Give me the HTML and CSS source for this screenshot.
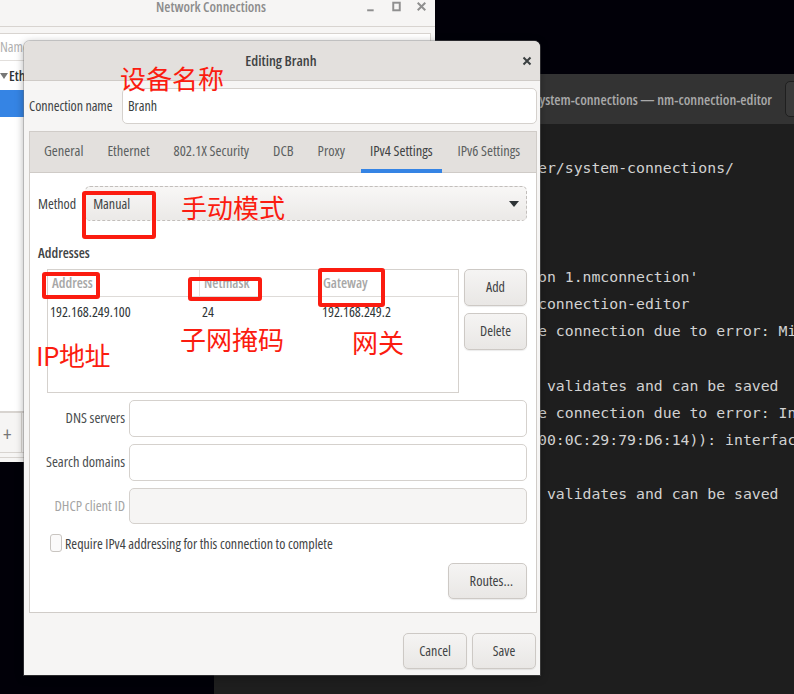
FILE: index.html
```html
<!DOCTYPE html>
<html lang="en">
<head>
<meta charset="utf-8">
<title>Editing Branh</title>
<link rel="stylesheet" href="styles.css">
</head>
<body>
<div class="desktop">
  <section class="terminal">
    <header class="term-head">
      <span class="term-title">system-connections — nm-connection-editor</span>
      <span class="term-btn"></span>
    </header>
    <pre class="term-body">er/system-connections/



on 1.nmconnection'
connection-editor
e connection due to error: Missing

 validates and can be saved
e connection due to error: Invalid
00:0C:29:79:D6:14)): interface

 validates and can be saved</pre>
  </section>

  <section class="net-window">
    <header class="net-head">
      <span class="net-title">Network Connections</span>
      <span class="net-controls">
        <svg class="ctl" viewBox="0 0 12 12"><path d="M2 9.5h6" /></svg>
        <svg class="ctl" viewBox="0 0 12 12"><rect x="3" y="2.5" width="6" height="7" /></svg>
        <svg class="ctl" viewBox="0 0 12 12"><path d="M2.5 2.5l7 7M9.5 2.5l-7 7" /></svg>
      </span>
    </header>
    <div class="net-list">
      <div class="net-col">Name</div>
      <div class="net-group"><i class="caret"></i>Eth</div>
      <div class="net-row"></div>
    </div>
    <footer class="net-foot"><div class="foot-bar"><span class="plus">+</span></div></footer>
  </section>

  <section class="dialog">
    <header class="dlg-head">
      <span class="dlg-title">Editing Branh</span>
      <svg class="dlg-close" viewBox="0 0 12 12"><path d="M2.5 2.5l7 7M9.5 2.5l-7 7" /></svg>
    </header>
    <div class="dlg-body">
      <div class="name-row">
        <label class="name-label">Connection name</label>
        <div class="field name-field">Branh</div>
      </div>
      <div class="notebook">
        <nav class="tabs">
          <span class="tab">General</span>
          <span class="tab">Ethernet</span>
          <span class="tab">802.1X Security</span>
          <span class="tab">DCB</span>
          <span class="tab">Proxy</span>
          <span class="tab active">IPv4 Settings</span>
          <span class="tab">IPv6 Settings</span>
        </nav>
        <div class="page">
          <div class="method-row">
            <label class="method-label">Method</label>
            <div class="combo"><span>Manual</span><i class="combo-arrow"></i></div>
          </div>
          <h2 class="addr-title">Addresses</h2>
          <div class="addr-row">
            <div class="addr-table">
              <div class="addr-head">
                <span class="col-a">Address</span><span class="col-b">Netmask</span><span class="col-c">Gateway</span>
              </div>
              <div class="addr-data">
                <span class="col-a">192.168.249.100</span><span class="col-b">24</span><span class="col-c">192.168.249.2</span>
              </div>
            </div>
            <div class="addr-btns">
              <button class="btn">Add</button>
              <button class="btn">Delete</button>
            </div>
          </div>
          <div class="form-row"><label>DNS servers</label><div class="field"></div></div>
          <div class="form-row"><label>Search domains</label><div class="field"></div></div>
          <div class="form-row disabled"><label>DHCP client ID</label><div class="field"></div></div>
          <div class="check-row"><i class="check"></i><span>Require IPv4 addressing for this connection to complete</span></div>
          <div class="routes-row"><button class="btn routes">Routes…</button></div>
        </div>
      </div>
      <div class="dlg-actions">
        <button class="btn act">Cancel</button>
        <button class="btn act">Save</button>
      </div>
    </div>
  </section>

  <span class="note n-name">设备名称</span>
  <span class="note n-mode">手动模式</span>
  <span class="note n-ip">IP地址</span>
  <span class="note n-mask">子网掩码</span>
  <span class="note n-gw">网关</span>
  <i class="mark m-manual"></i>
  <i class="mark m-addr"></i>
  <i class="mark m-mask"></i>
  <i class="mark m-gw"></i>
</div>
</body>
</html>
```
FILE: styles.css
```css
* { box-sizing: border-box; }
html, body { margin: 0; padding: 0; background: #000006; }
body { font-family: "Open Sans", "Noto Sans", sans-serif; font-stretch: 75%; font-size: 14px; color: #3a3f40; }
.desktop { position: relative; width: 794px; height: 694px; overflow: hidden; background: #010008; }

/* terminal */
.terminal { position: absolute; left: 214px; top: 74px; width: 580px; height: 620px; background: #1e1e1e; overflow: hidden; }
.term-head { height: 50px; background: #333333; display: flex; align-items: center; justify-content: flex-end; gap: 13px; margin-right: -13px; }
.term-title { color: #a9a9a9; font-size: 14.3px; font-weight: 600; white-space: nowrap; }
.term-btn { width: 22px; height: 36px; border: 1px solid #1f1f1f; border-radius: 5px; background: #3a3a3a; }
.term-body { margin: 0; padding: 30px 0 0 324px; font-family: "DejaVu Sans Mono", monospace; font-size: 14.8px; line-height: 27.2px; color: #d2d2d2; white-space: pre; }

/* network connections window */
.net-window { position: absolute; left: 0; top: 0; width: 435px; height: 462px; background: #f6f5f4; display: flex; flex-direction: column; }
.net-head { height: 27px; flex: none; position: relative; text-align: center; border-bottom: 1px solid #d8d4d0; }
.net-title { display: block; color: #8c8c8c; font-size: 14px; line-height: 14px; margin-left: -13px; font-weight: 600; }
.net-controls { position: absolute; left: 365px; top: 0; display: flex; gap: 12px; }
.ctl { width: 13px; height: 13px; fill: none; stroke: #8f8f8f; stroke-width: 1.8; }
.net-list { margin: 6px 4px 0 -1px; flex: 1; background: #fff; border: 1px solid #d8d4d0; }
.net-col { height: 27px; line-height: 26px; color: #b0b0b0; border-bottom: 1px solid #e2dfdc; }
.net-group { height: 29px; display: flex; align-items: center; gap: 1px; font-weight: 600; color: #2e3436; }
.caret { width: 0; height: 0; border-left: 4px solid transparent; border-right: 4px solid transparent; border-top: 6px solid #777; }
.net-row { height: 27px; background: #3584e4; }
.net-foot { height: 50px; flex: none; border-top: 1px solid #d8d4d0; }
.foot-bar { height: 40px; border-bottom: 1px solid #d8d4d0; box-shadow: 0 4px 0 #f6f5f4, 0 5px 0 #d8d4d0; }
.plus { display: block; width: 22px; height: 39px; border-right: 1px solid #d8d4d0; padding-left: 3px; color: #777; font-size: 20px; line-height: 42px; }

/* dialog */
.dialog { position: absolute; left: 24px; top: 41px; width: 516px; height: 634px; background: #f6f5f4; border-radius: 6px 6px 0 0; box-shadow: 0 0 0 1px rgba(120,120,120,.35), 0 2px 8px rgba(0,0,0,.35); display: flex; flex-direction: column; }
.dlg-head { height: 40px; flex: none; position: relative; display: flex; align-items: center; justify-content: center; background: #e3e0dd; border-bottom: 1px solid #cfcbc7; border-radius: 6px 6px 0 0; }
.dlg-title { font-size: 14.5px; font-weight: 600; color: #3f4344; margin-left: -2px; }
.dlg-close { position: absolute; right: 7px; top: 14px; width: 12px; height: 12px; fill: none; stroke: #3a3f40; stroke-width: 2; }
.dlg-body { flex: 1; padding: 7px 3px 6px 5px; display: flex; flex-direction: column; }
.name-row { display: flex; align-items: center; justify-content: space-between; height: 36px; }
.name-label { color: #3f4344; white-space: nowrap; letter-spacing: -.06px; padding-bottom: 1px; }
.field { background: #fff; border: 1px solid #d5d1cd; border-radius: 5px; height: 36px; line-height: 33px; padding: 0 5px; flex: 1; }
.name-field { flex: none; width: 415px; }
.notebook { margin-top: 7px; width: 508px; height: 482px; border: 1px solid #d0ccc8; background: #fff; display: flex; flex-direction: column; }
.tabs { height: 41px; flex: none; background: #e3e0dd; border-bottom: 1px solid #cfcbc7; display: flex; gap: 6px; padding-left: 5px; }
.tab { position: relative; padding: 0 9px; font-size: 14.4px; line-height: 38px; color: #5b5f60; white-space: nowrap; }
.tab.active { color: #3f4344; margin-left: 1px; }
.tab:last-child { margin-left: 1px; }
.tab.active::after { content: ""; position: absolute; left: 0; right: 0; bottom: -1px; height: 4px; background: #3584e4; }
.page { flex: 1; padding: 13px 9px 0 8px; display: flex; flex-direction: column; }
.method-row { display: flex; align-items: center; gap: 9px; height: 35px; }
.method-label { color: #3f4344; }
.combo { flex: 1; height: 35px; display: flex; align-items: center; justify-content: space-between; padding: 0 7px; border: 1px dashed #c2bebb; border-radius: 5px; background: linear-gradient(#f8f7f6, #ebe9e7); color: #3f4344; }
.combo-arrow { width: 0; height: 0; border-left: 5px solid transparent; border-right: 5px solid transparent; border-top: 6px solid #2e3436; }
.addr-title { margin: 23px 0 0; font-size: 14px; line-height: 18px; font-weight: 600; color: #3f4344; }
.addr-row { display: flex; gap: 5px; margin: 7px 0 0 9px; }
.addr-table { width: 412px; height: 124px; border: 1px solid #d5d1cd; background: #fff; }
.addr-head { height: 27px; display: grid; grid-template-columns: 151px 120px 1fr; border-bottom: 1px solid #dedbd8; color: #a7a7a7; font-weight: 600; line-height: 26px; }
.addr-head span + span { border-left: 1px solid #e2dfdc; }
.addr-head .col-a, .addr-head .col-b { padding-left: 4px; }
.addr-head .col-c { padding-left: 3px; }
.addr-data { display: grid; grid-template-columns: 151px 120px 1fr; line-height: 30px; color: #2e3436; }
.addr-data .col-a { padding-left: 2px; }
.addr-data .col-b, .addr-data .col-c { padding-left: 3px; }
.addr-btns { display: flex; flex-direction: column; gap: 7px; width: 63px; }
.btn { height: 37px; font: inherit; color: #3f4344; border: 1px solid #cdc9c5; border-radius: 5px; background: linear-gradient(#f5f4f3, #e9e7e5); box-shadow: 0 1px 1px rgba(0,0,0,.08); padding: 0 0 3px; }
.form-row { display: flex; align-items: center; gap: 4px; margin-top: 7px; }
.form-row label { width: 87px; font-size: 14.4px; padding-bottom: 2px; text-align: right; color: #4a4e4f; white-space: nowrap; }
.form-row .field { height: 37px; }
.form-row.disabled .field { height: 36px; }
.disabled label { color: #a4a4a4; }
.disabled .field { background: #f6f5f4; }
.check-row { display: flex; align-items: center; gap: 3px; margin: 10px 0 0 12px; height: 18px; color: #3f4344; }
.check { width: 12px; height: 18px; border: 1px solid #c9c5c1; border-radius: 3px; background: #fbfafa; }
.routes-row { display: flex; justify-content: flex-end; margin-top: 11px; }
.routes { width: 79px; height: 36px; text-align: right; padding: 0 13px 2px 0; font-size: 14.4px; }
.dlg-actions { display: flex; justify-content: flex-end; gap: 5px; margin-top: 20px; padding-right: 1px; }
.act { width: 64px; height: 36px; padding-bottom: 1px; }

/* annotations over the screenshot */
.note { position: absolute; color: #fb1c10; font-family: "Noto Sans CJK SC", "Liberation Sans", sans-serif; font-size: 26px; line-height: 30px; white-space: nowrap; }
.n-name { left: 120px; top: 63px; }
.n-mode { left: 181px; top: 192px; }
.n-ip { left: 36px; top: 340px; letter-spacing: -.5px; }
.n-mask { left: 180px; top: 324px; }
.n-gw { left: 352px; top: 327px; }
.mark { position: absolute; border: 4px solid #fb1c10; border-radius: 3px; }
.m-manual { left: 82px; top: 191px; width: 74px; height: 48px; }
.m-addr { left: 42px; top: 272px; width: 58px; height: 27px; }
.m-mask { left: 188px; top: 277px; width: 74px; height: 24px; }
.m-gw { left: 318px; top: 268px; width: 67px; height: 39px; }
```
